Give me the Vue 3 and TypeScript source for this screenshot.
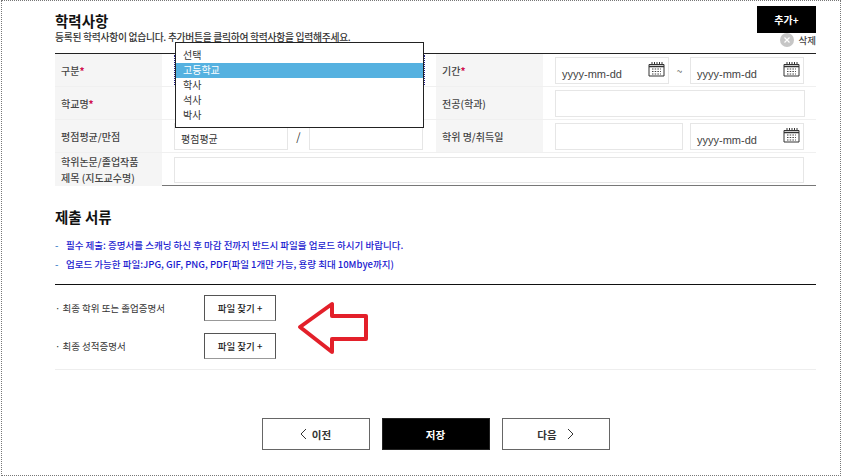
<script setup lang="ts">
const options = ['선택', '고등학교', '학사', '석사', '박사']
const calPath = 'M1 3.5h15v11.5H1z'
const notes = [
  '필수 제출: 증명서를 스캐닝 하신 후 마감 전까지 반드시 파일을 업로드 하시기 바랍니다.',
  '업로드 가능한 파일:JPG, GIF, PNG, PDF(파일 1개만 가능, 용량 최대 10Mbye까지)',
]
const files = ['최종 학위 또는 졸업증명서', '최종 성적증명서']
</script>

<template>
  <div class="frame">
    <div class="page">
      <header class="head">
        <div class="head-text">
          <h2 class="title">학력사항</h2>
          <p class="sub">등록된 학력사항이 없습니다. 추가버튼을 클릭하여 학력사항을 입력해주세요.</p>
        </div>
        <div class="head-actions">
          <button class="add">추가+</button>
          <div class="del">
            <span class="del-ic"><svg width="14" height="14" viewBox="0 0 14 14"><circle cx="7" cy="7" r="7" fill="#c6c6c6" /><path d="M4.500 4.500l5 5M9.500 4.500l-5 5" stroke="#fff" stroke-width="1.200" /></svg></span>
            <span>삭제</span>
          </div>
        </div>
      </header>

      <section class="table">
        <div class="row">
          <div class="label">구분<em>*</em></div>
          <div class="cell select-cell">
            <div class="select-focus"></div>
            <ul class="dropdown">
              <li v-for="(o, i) in options" :key="o" :class="{ on: i === 1 }">{{ o }}</li>
            </ul>
          </div>
          <div class="label">기간<em>*</em></div>
          <div class="cell dates">
            <div class="box date">yyyy-mm-dd
              <svg class="cal" width="17" height="16" viewBox="0 0 17 16"><path :d="calPath" fill="#fff" stroke="#333" /><path d="M1 5.500h15" stroke="#333" stroke-width="1.500" /><path d="M4 1v3M6.500 1v3M9 1v3M11.500 1v3M14 1v3" stroke="#333" /><path d="M4 8h9M4 10.500h9M4 13h9" stroke="#444" stroke-dasharray="1.500 1.200" /></svg>
            </div>
            <span class="tilde">~</span>
            <div class="box date">yyyy-mm-dd
              <svg class="cal" width="17" height="16" viewBox="0 0 17 16"><path :d="calPath" fill="#fff" stroke="#333" /><path d="M1 5.500h15" stroke="#333" stroke-width="1.500" /><path d="M4 1v3M6.500 1v3M9 1v3M11.500 1v3M14 1v3" stroke="#333" /><path d="M4 8h9M4 10.500h9M4 13h9" stroke="#444" stroke-dasharray="1.500 1.200" /></svg>
            </div>
          </div>
        </div>
        <div class="row">
          <div class="label">학교명<em>*</em></div>
          <div class="cell"></div>
          <div class="label">전공(학과)</div>
          <div class="cell"><div class="box wide"></div></div>
        </div>
        <div class="row">
          <div class="label">평점평균/만점</div>
          <div class="cell gpa">
            <div class="box gpa-a">평점평균</div>
            <span class="slash">/</span>
            <div class="box gpa-b"></div>
          </div>
          <div class="label">학위 명/취득일</div>
          <div class="cell degree">
            <div class="box deg-a"></div>
            <div class="box date">yyyy-mm-dd
              <svg class="cal" width="17" height="16" viewBox="0 0 17 16"><path :d="calPath" fill="#fff" stroke="#333" /><path d="M1 5.500h15" stroke="#333" stroke-width="1.500" /><path d="M4 1v3M6.500 1v3M9 1v3M11.500 1v3M14 1v3" stroke="#333" /><path d="M4 8h9M4 10.500h9M4 13h9" stroke="#444" stroke-dasharray="1.500 1.200" /></svg>
            </div>
          </div>
        </div>
        <div class="row last">
          <div class="label two">학위논문/졸업작품<br />제목 (지도교수명)</div>
          <div class="cell full"><div class="box thesis"></div></div>
        </div>
      </section>

      <h2 class="title docs">제출 서류</h2>
      <ul class="notes">
        <li v-for="n in notes" :key="n"><span class="dash">-</span>{{ n }}</li>
      </ul>

      <section class="files">
        <div v-for="f in files" :key="f" class="file-row">
          <span class="file-name">· {{ f }}</span>
          <button class="find">파일 찾기 +</button>
        </div>
        <svg class="arrow" width="74" height="58" viewBox="0 0 74 58">
          <path d="M3 27L35 4V16H69V39H35V52Z" fill="#fff" stroke="#e3202a" stroke-width="4" stroke-linejoin="round" />
        </svg>
      </section>

      <nav class="nav">
        <button class="btn">
          <svg class="chev" width="7" height="12" viewBox="0 0 7 12"><path d="M6 1L1 6l5 5" fill="none" stroke="#333" /></svg>
          <span>이전</span>
        </button>
        <button class="btn save">저장</button>
        <button class="btn">
          <span>다음</span>
          <svg class="chev next" width="7" height="12" viewBox="0 0 7 12"><path d="M1 1l5 5-5 5" fill="none" stroke="#333" /></svg>
        </button>
      </nav>
    </div>
  </div>
</template>

<style scoped>
.frame {
  box-sizing: border-box;
  width: 840px;
  height: 476px;
  border: 1px dotted #777;
  margin-left: 1px;
  background: #fff;
  overflow: hidden;
  font-family: "Noto Sans CJK KR", "Noto Sans", sans-serif;
  color: #333;
}
.page {
  position: relative;
  width: 761px;
  margin-left: 53px;
}
.head {
  display: flex;
  justify-content: space-between;
  height: 52px;
}
.head-text {
  padding-top: 11px;
}
.title {
  margin: 0;
  font-size: 14.5px;
  line-height: 18px;
  font-weight: 700;
  color: #111;
}
.sub {
  margin: 0;
  font-size: 9.8px;
  font-weight: 500;
  line-height: 14px;
  color: #333;
  letter-spacing: -0.3px;
}
.head-actions {
  display: flex;
  flex-direction: column;
  align-items: flex-end;
  padding-top: 5px;
}
.add {
  width: 59px;
  height: 27px;
  border: 0;
  padding: 0;
  background: #000;
  color: #fff;
  font: 700 10px "Noto Sans CJK KR", sans-serif;
}
.del {
  display: flex;
  align-items: center;
  gap: 5px;
  margin-top: 0;
  font-size: 9.5px;
  font-weight: 500;
  line-height: 14px;
  color: #444;
}
.del-ic {
  display: flex;
}
.table {
  border-top: 1px solid #222;
  border-bottom: 1px solid #777;
}
.row {
  display: grid;
  grid-template-columns: 107px 274px 107px 273px;
  height: 33px;
  border-bottom: 1px solid #f0f0f0;
  box-sizing: border-box;
}
.row.last {
  border-bottom: 0;
  grid-template-columns: 107px 654px;
  height: 32px;
}
.label {
  display: flex;
  align-items: center;
  background: #f5f5f5;
  padding: 2px 0 0 6px;
  font-size: 10px;
  line-height: 16px;
  color: #444;
  font-weight: 500;
}
.label.two {
  display: block;
  padding-top: 1px;
}
.label em {
  font-style: normal;
  color: #d0104c;
  font-weight: 700;
}
.cell {
  display: flex;
  align-items: center;
  gap: 8px;
  padding-left: 12px;
  position: relative;
}
.box {
  box-sizing: border-box;
  height: 27px;
  border: 1px solid #e6e6e6;
  background: #fff;
  font-size: 10.5px;
}
.select-focus {
  box-sizing: border-box;
  width: 251px;
  height: 30px;
  border-left: 1px dotted #24248c;
  border-right: 1px dotted #24248c;
}
.dropdown {
  position: absolute;
  left: 13px;
  top: -12px;
  box-sizing: border-box;
  width: 249px;
  height: 86px;
  margin: 0;
  padding: 5px 0 0;
  list-style: none;
  background: #fff;
  border: 1px solid #222;
  z-index: 2;
  font-size: 10px;
  color: #333;
}
.dropdown li {
  height: 15px;
  line-height: 14px;
  padding-left: 7px;
}
.dropdown li.on {
  background: #55b1e0;
  color: #fff;
}
.dates,
.degree {
  gap: 0;
}
.date {
  position: relative;
  width: 114px;
  padding: 8px 0 0 6px;
  line-height: 16px;
  font-family: "Liberation Sans", sans-serif;
  font-size: 11px;
  color: #444;
}
.cal {
  position: absolute;
  right: 3px;
  top: 3px;
}
.tilde {
  width: 21px;
  text-align: center;
  font-size: 10px;
  color: #666;
}
.wide {
  width: 250px;
}
.gpa {
  gap: 0;
}
.gpa-a {
  width: 114px;
  padding-left: 6px;
  padding-top: 7px;
  line-height: 16px;
  font-size: 10px;
}
.slash {
  width: 21px;
  text-align: center;
  font-size: 11px;
}
.gpa-b {
  width: 114px;
}
.deg-a {
  width: 128px;
  margin-right: 7px;
}
.thesis {
  width: 630px;
  height: 26px;
}
.docs {
  margin-top: 21px;
  line-height: 20px;
}
.notes {
  margin: 9px 0 0;
  padding: 0;
  list-style: none;
  font-size: 9.5px;
  line-height: 19px;
  color: #1a1ad0;
  font-weight: 500;
}
.dash {
  display: inline-block;
  width: 11px;
  color: #3a7bc8;
}
.files {
  position: relative;
  margin-top: 10px;
  border-top: 1px solid #111;
  border-bottom: 1px solid #eee;
  height: 86px;
  box-sizing: border-box;
  padding-top: 10px;
}
.file-row {
  display: flex;
  align-items: center;
  height: 26px;
  margin-bottom: 12px;
}
.file-name {
  width: 149px;
  font-size: 9.5px;
  color: #333;
}
.find {
  box-sizing: border-box;
  width: 72px;
  height: 26px;
  padding: 0;
  background: #fff;
  border: 1px solid #555;
  border-bottom-color: #999;
  font: 500 9.5px "Noto Sans CJK KR", sans-serif;
  color: #222;
}
.arrow {
  position: absolute;
  left: 242px;
  top: 15px;
}
.nav {
  display: flex;
  justify-content: center;
  gap: 12px;
  margin-top: 48px;
}
.btn {
  box-sizing: border-box;
  display: flex;
  align-items: center;
  justify-content: center;
  gap: 5px;
  width: 108px;
  height: 32px;
  background: #fff;
  border: 1px solid #666;
  padding: 0;
  font: 700 10.5px "Noto Sans CJK KR", sans-serif;
  color: #333;
}
.btn.save {
  background: #000;
  color: #fff;
  border-color: #222;
}
.chev.next {
  margin-left: 5px;
}
</style>
